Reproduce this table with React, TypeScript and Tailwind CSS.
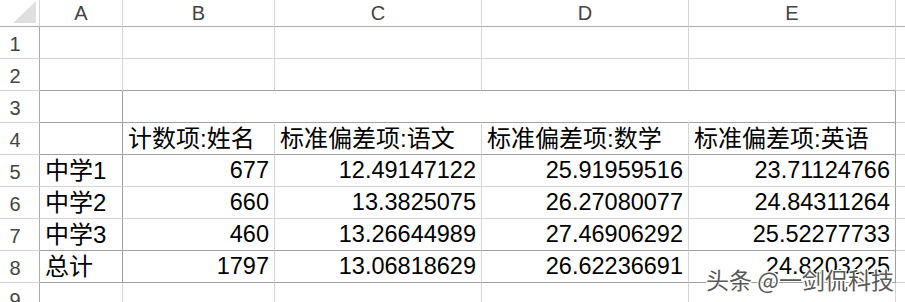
type Line = "light" | "dark" | "head" | "none";

const rightCls: Record<Line, string> = {
  light: "border-r-[#d4d4d4]",
  dark: "border-r-[#a0a0a0]",
  head: "border-r-[#ababab]",
  none: "border-r-white",
};

const bottomCls: Record<Line, string> = {
  light: "border-b-[#d4d4d4]",
  dark: "border-b-[#a0a0a0]",
  head: "border-b-[#ababab]",
  none: "border-b-white",
};

type CellSpec = {
  text?: string;
  num?: boolean;
  r: Line;
  b: Line;
};

const cols = ["A", "B", "C", "D", "E", ""];

// rows 1..9, each with cells A..E and the spill column
const rows: CellSpec[][] = [
  [
    { r: "light", b: "light" },
    { r: "light", b: "light" },
    { r: "light", b: "light" },
    { r: "light", b: "light" },
    { r: "light", b: "light" },
    { r: "light", b: "light" },
  ],
  [
    { r: "light", b: "dark" },
    { r: "light", b: "dark" },
    { r: "light", b: "dark" },
    { r: "light", b: "dark" },
    { r: "light", b: "dark" },
    { r: "light", b: "light" },
  ],
  [
    { r: "dark", b: "dark" },
    { r: "none", b: "dark" },
    { r: "none", b: "dark" },
    { r: "none", b: "dark" },
    { r: "dark", b: "dark" },
    { r: "light", b: "light" },
  ],
  [
    { r: "dark", b: "dark" },
    { text: "计数项:姓名", r: "light", b: "dark" },
    { text: "标准偏差项:语文", r: "light", b: "dark" },
    { text: "标准偏差项:数学", r: "light", b: "dark" },
    { text: "标准偏差项:英语", r: "dark", b: "dark" },
    { r: "light", b: "light" },
  ],
  [
    { text: "中学1", r: "dark", b: "light" },
    { text: "677", num: true, r: "light", b: "light" },
    { text: "12.49147122", num: true, r: "light", b: "light" },
    { text: "25.91959516", num: true, r: "light", b: "light" },
    { text: "23.71124766", num: true, r: "dark", b: "light" },
    { r: "light", b: "light" },
  ],
  [
    { text: "中学2", r: "dark", b: "light" },
    { text: "660", num: true, r: "light", b: "light" },
    { text: "13.3825075", num: true, r: "light", b: "light" },
    { text: "26.27080077", num: true, r: "light", b: "light" },
    { text: "24.84311264", num: true, r: "dark", b: "light" },
    { r: "light", b: "light" },
  ],
  [
    { text: "中学3", r: "dark", b: "dark" },
    { text: "460", num: true, r: "light", b: "dark" },
    { text: "13.26644989", num: true, r: "light", b: "dark" },
    { text: "27.46906292", num: true, r: "light", b: "dark" },
    { text: "25.52277733", num: true, r: "dark", b: "dark" },
    { r: "light", b: "light" },
  ],
  [
    { text: "总计", r: "dark", b: "dark" },
    { text: "1797", num: true, r: "light", b: "dark" },
    { text: "13.06818629", num: true, r: "light", b: "dark" },
    { text: "26.62236691", num: true, r: "light", b: "dark" },
    { text: "24.8203225", num: true, r: "dark", b: "dark" },
    { r: "light", b: "light" },
  ],
  [
    { r: "light", b: "light" },
    { r: "light", b: "light" },
    { r: "light", b: "light" },
    { r: "light", b: "light" },
    { r: "light", b: "light" },
    { r: "light", b: "light" },
  ],
];

const sheetFont = "font-['Liberation_Sans','Noto_Sans_CJK_SC',sans-serif]";

function Corner() {
  return (
    <div className="relative border-r border-b border-r-[#d4d4d4] border-b-[#ababab] bg-white">
      <svg width="40" height="27" className="block">
        <polygon points="36,1 36,23 13,23" fill="#dfdfdf" />
      </svg>
    </div>
  );
}

export default function App() {
  return (
    <div className={`${sheetFont} relative w-[905px] h-[302px] overflow-hidden bg-white text-black`}>
      <div className="grid grid-cols-[40px_83px_152px_207px_207px_207px_1fr] grid-rows-[27px_repeat(9,32px)]">
        <Corner />
        {cols.map((c, i) => (
          <div
            key={i}
            className="flex items-center justify-center border-r border-b border-r-[#d4d4d4] border-b-[#ababab] text-[20px] leading-none text-[#444]"
          >
            {c}
          </div>
        ))}

        {rows.map((row, ri) => (
          <div key={ri} className="contents">
            <div className="flex items-center justify-center pr-[9px] pt-[3px] border-r border-b border-r-[#ababab] border-b-[#d4d4d4] text-[20px] leading-none text-[#444]">
              {ri + 1}
            </div>
            {row.map((cell, ci) => (
              <div
                key={ci}
                className={`flex items-center whitespace-nowrap overflow-visible border-r border-b px-[5px] leading-none ${rightCls[cell.r]} ${bottomCls[cell.b]} ${
                  cell.num ? "justify-end text-[23.5px]" : "justify-start text-[24px]"
                }`}
              >
                {cell.text}
              </div>
            ))}
          </div>
        ))}
      </div>

      {/* watermark */}
      <div className="absolute left-[706px] top-[268px] text-[23px] leading-none whitespace-nowrap text-[#595959] font-['Noto_Sans_CJK_SC',sans-serif] [text-shadow:1px_1px_0_#fff,-1px_-1px_0_#fff,1px_-1px_0_#fff,-1px_1px_0_#fff]">
        头条 @一剑侃科技
      </div>
    </div>
  );
}
